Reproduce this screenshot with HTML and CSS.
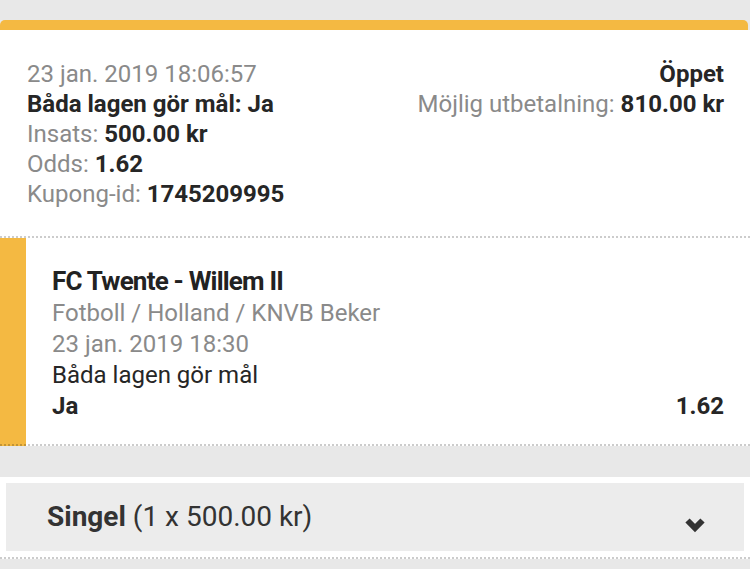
FILE: index.html
```html
<!DOCTYPE html>
<html lang="sv">
<head>
    <meta charset="UTF-8">
    <meta name="viewport" content="width=device-width, initial-scale=1.0">
    <title>Kupong</title>
    <link rel="stylesheet" href="styles.css">
</head>
<body>
    <div class="coupon">
        <div class="coupon-bar"></div>
        <div class="summary">
            <div class="summary-left">
                <div class="muted">23 jan. 2019 18:06:57</div>
                <div class="strong">Båda lagen gör mål: Ja</div>
                <div><span class="muted">Insats:</span> <b>500.00 kr</b></div>
                <div><span class="muted">Odds:</span> <b>1.62</b></div>
                <div><span class="muted">Kupong-id:</span> <b>1745209995</b></div>
            </div>
            <div class="summary-right">
                <div class="strong">Öppet</div>
                <div><span class="muted">Möjlig utbetalning:</span> <b>810.00 kr</b></div>
            </div>
        </div>
        <div class="event">
            <div class="event-body">
                <h2>FC Twente - Willem II</h2>
                <div class="muted">Fotboll / Holland / KNVB Beker</div>
                <div class="muted">23 jan. 2019 18:30</div>
                <div>Båda lagen gör mål</div>
                <div class="pick">
                    <b>Ja</b>
                    <b>1.62</b>
                </div>
            </div>
        </div>
    </div>
    <div class="bet-type">
        <div class="bet-box">
            <span><b>Singel</b> (1 x 500.00 kr)</span>
            <svg class="chevron" width="22" height="17" viewBox="0 0 22 17">
                <polyline points="3.5,4.5 11,12 18.5,4.5" fill="none" stroke="#333" stroke-width="6"/>
            </svg>
        </div>
    </div>
</body>
</html>
```

FILE: styles.css
```css
* {
	margin: 0px;
	padding: 0px;
	box-sizing: border-box;
}
body {
	background-color: #e8e8e8;
	font-family: Roboto, "Liberation Sans", sans-serif;
	font-size: 24px;
	line-height: 30px;
	color: #262626;
	padding-top: 20px;
}
b,
.strong {
	font-weight: 700;
}
.muted {
	color: #8a8a8a;
}
.coupon-bar {
	height: 10px;
	margin-right: 2px;
	background-color: #f4b942;
	border-radius: 5px 5px 0 0;
}
.summary {
	background-color: white;
	display: flex;
	justify-content: space-between;
	padding: 29px 26px 27px 27px;
	border-bottom: 2px dotted rgba(0, 0, 0, 0.2);
}
.summary-right {
	text-align: right;
}
.event {
	background: linear-gradient(to right, #f4b942 26px, white 26px);
	border-bottom: 2px dotted rgba(0, 0, 0, 0.2);
	padding: 26px 26px 22px 52px;
	line-height: 31px;
}
.event h2 {
	font-size: 26px;
	line-height: 34px;
	font-weight: 700;
	letter-spacing: -0.8px;
	color: #222;
}
.pick {
	display: flex;
	justify-content: space-between;
}
.bet-type {
	margin-top: 31px;
	background-color: white;
	padding: 6px;
	border-bottom: 2px dotted rgba(0, 0, 0, 0.2);
}
.bet-box {
	background-color: #ececec;
	height: 68px;
	display: flex;
	align-items: center;
	justify-content: space-between;
	padding: 0 38px 0 41px;
	font-size: 28px;
	color: #333;
}
.chevron {
	margin-top: 14px;
}
```
